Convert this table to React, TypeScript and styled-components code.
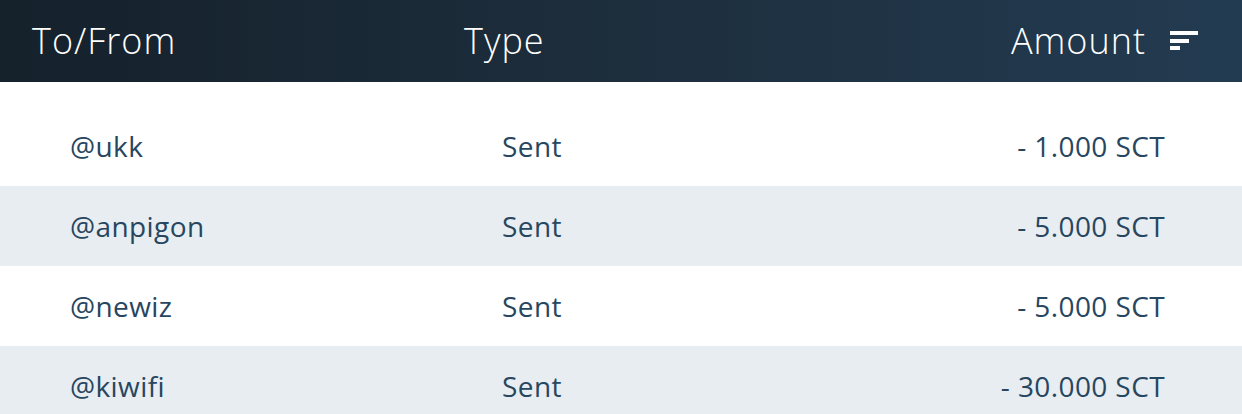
import React from "react";
import styled, { createGlobalStyle } from "styled-components";

const Global = createGlobalStyle`
  html, body { margin: 0; padding: 0; background: #ffffff; }
  body { font-family: "Open Sans", "Noto Sans", sans-serif; }
`;

const Table = styled.div`
  width: 1242px;
  display: flex;
  flex-direction: column;
`;

const Header = styled.div`
  height: 82px;
  display: grid;
  grid-template-columns: 432px 1fr auto;
  align-items: center;
  padding: 0 44px 0 32px;
  background: linear-gradient(90deg, #15212b 0%, #1d2e3d 50%, #233b51 100%);
  color: #ffffff;
  font-size: 36px;
  font-weight: 300;
  letter-spacing: 1px;
`;

const HeadCell = styled.div<{ $right?: boolean }>`
  display: flex;
  align-items: center;
  justify-content: ${(p) => (p.$right ? "flex-end" : "flex-start")};
  gap: 24px;
  line-height: 1;
`;

const Body = styled.div`
  padding-top: 24px;
  display: flex;
  flex-direction: column;
`;

const Row = styled.div<{ $alt: boolean }>`
  height: 80px;
  display: grid;
  grid-template-columns: 432px 1fr auto;
  align-items: center;
  padding: 0 77px 0 70px;
  background: ${(p) => (p.$alt ? "#e8edf1" : "#ffffff")};
  color: #27465f;
  font-size: 28px;
  letter-spacing: 0.4px;
  font-weight: 400;
`;

const Cell = styled.div<{ $right?: boolean }>`
  text-align: ${(p) => (p.$right ? "right" : "left")};
`;

const SortIcon = () => (
  <svg width="28" height="20" viewBox="0 0 28 20" style={{ display: "block" }}>
    <rect x="0" y="0" width="28" height="4" fill="#ffffff" />
    <rect x="0" y="8" width="19" height="4" fill="#ffffff" />
    <rect x="0" y="15" width="10" height="4" fill="#ffffff" />
  </svg>
);

const rows = [
  { who: "@ukk", type: "Sent", amount: "- 1.000 SCT" },
  { who: "@anpigon", type: "Sent", amount: "- 5.000 SCT" },
  { who: "@newiz", type: "Sent", amount: "- 5.000 SCT" },
  { who: "@kiwifi", type: "Sent", amount: "- 30.000 SCT" },
];

export default function App() {
  return (
    <>
      <Global />
      <Table>
        <Header>
          <HeadCell>To/From</HeadCell>
          <HeadCell>Type</HeadCell>
          <HeadCell $right>
            Amount
            <SortIcon />
          </HeadCell>
        </Header>
        <Body>
          {rows.map((r, i) => (
            <Row key={i} $alt={i % 2 === 1}>
              <Cell>{r.who}</Cell>
              <Cell>{r.type}</Cell>
              <Cell $right>{r.amount}</Cell>
            </Row>
          ))}
        </Body>
      </Table>
    </>
  );
}
